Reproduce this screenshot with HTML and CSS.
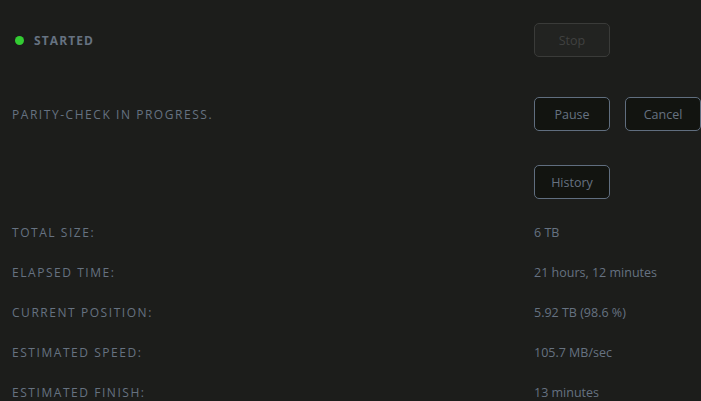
FILE: index.html
```html
<!DOCTYPE html>
<html lang="en">
<head>
    <meta charset="UTF-8">
    <meta name="viewport" content="width=device-width, initial-scale=1.0">
    <title>Parity check</title>
    <link rel="stylesheet" href="styles.css">
</head>
<body>
    <div class="panel">
        <!-- 상태 줄 -->
        <div class="row row-top">
            <div class="label status"><span class="dot"></span>STARTED</div>
            <div class="actions">
                <button class="btn" disabled>Stop</button>
            </div>
        </div>
        <div class="row row-mid">
            <div class="label">PARITY-CHECK IN PROGRESS.</div>
            <div class="actions">
                <button class="btn">Pause</button>
                <button class="btn">Cancel</button>
            </div>
        </div>
        <div class="row row-mid">
            <div class="label"></div>
            <div class="actions">
                <button class="btn">History</button>
            </div>
        </div>
        <!-- 진행 정보 -->
        <div class="info">
            <div class="row info-row"><div class="label">TOTAL SIZE:</div><div class="value">6 TB</div></div>
            <div class="row info-row"><div class="label">ELAPSED TIME:</div><div class="value">21 hours, 12 minutes</div></div>
            <div class="row info-row"><div class="label">CURRENT POSITION:</div><div class="value">5.92 TB (98.6 %)</div></div>
            <div class="row info-row"><div class="label">ESTIMATED SPEED:</div><div class="value">105.7 MB/sec</div></div>
            <div class="row info-row"><div class="label">ESTIMATED FINISH:</div><div class="value">13 minutes</div></div>
        </div>
    </div>
</body>
</html>
```

FILE: styles.css
```css
body{
    margin: 0;
    background-color: #1c1d1b;
    font-family: "Open Sans", "Noto Sans", sans-serif;
    color: #667281;
    overflow: hidden;
}
.panel{
    padding: 23px 0 0 12px;
}
.row{
    display: flex;
    align-items: center;
}
.row-top{
    height: 34px;
}
.row-mid{
    height: 34px;
    margin-top: 34px;
}
.row-mid:nth-child(2){
    margin-top: 40px;
}
.label{
    width: 522px;
    flex-shrink: 0;
    font-size: 12px;
    letter-spacing: 1.55px;
}
.status{
    display: flex;
    align-items: center;
    font-weight: bold;
    letter-spacing: 1.1px;
}
.dot{
    width: 9px;
    height: 9px;
    border-radius: 50%;
    background-color: #33cc33;
    margin: 0 10px 0 3px;
}
.actions{
    display: flex;
    gap: 15px;
}
.btn{
    width: 76px;
    height: 34px;
    box-sizing: border-box;
    border: 1px solid #606e7f;
    border-radius: 5px;
    background-color: #121410;
    color: #667281;
    font-family: inherit;
    font-size: 12.5px;
    padding: 0;
}
.btn:disabled{
    background-color: #222321;
    border-color: #3a3b39;
    color: #404140;
}
.info{
    margin-top: 13px;
}
.info-row{
    height: 40px;
}
.value{
    font-size: 12.5px;
}
```
